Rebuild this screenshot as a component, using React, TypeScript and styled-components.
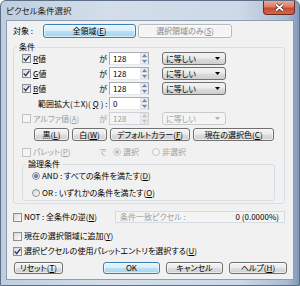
import React from "react";
import styled, { createGlobalStyle } from "styled-components";

const GlobalStyle = createGlobalStyle`
    html, body {
        margin: 0;
        padding: 0;
        background: #ffffff;
    }
    body {
        font-family: "Noto Sans CJK JP", "Noto Sans", sans-serif;
        font-size: 8px;
        line-height: 10px;
        color: #000;
        font-feature-settings: "palt";
    }
`;

type Tone = "normal" | "default" | "disabled";

const GREY_TEXT = "#a0a0a0";

export default function App() {
    return (
        <>
            <GlobalStyle />
            <Window>
                <TitleBar>
                    <Title>ピクセル条件選択</Title>
                    <CloseButton>
                        <svg width="11" height="9" viewBox="0 0 11 9">
                            <path d="M2 1.5 L9 7.5 M9 1.5 L2 7.5" stroke="#4a1d14" strokeWidth="3.2" />
                            <path d="M2 1.5 L9 7.5 M9 1.5 L2 7.5" stroke="#ffffff" strokeWidth="1.8" />
                        </svg>
                    </CloseButton>
                </TitleBar>
                <Client>
                    <TargetRow>
                        <TargetLabel>対象 :</TargetLabel>
                        <Button $w={93} $h={14} $tone="default">
                            全領域(<Mn>E</Mn>)
                        </Button>
                        <Button $w={94} $h={14} $tone="disabled">
                            選択領域のみ(<Mn>S</Mn>)
                        </Button>
                    </TargetRow>

                    <Group>
                        <Legend>条件</Legend>
                        <GroupBody>
                            <ConditionGrid>
                                <ChannelRow mn="R" suffix="値" checked />
                                <ChannelRow mn="G" suffix="値" checked />
                                <ChannelRow mn="B" suffix="値" checked />
                                <Cell $indent={16}>
                                    範囲拡大(±X)(<Mn>Q</Mn>) :
                                </Cell>
                                <span />
                                <SpinBox value="0" />
                                <span />
                                <Cell>
                                    <CheckBox disabled />
                                    <Muted>
                                        アルファ値(<Mn>A</Mn>)
                                    </Muted>
                                </Cell>
                                <Muted>が</Muted>
                                <SpinBox value="128" disabled />
                                <Combo value="に等しい" disabled />
                            </ConditionGrid>

                            <ColorButtons>
                                <Button $w={35} $h={13}>
                                    黒(<Mn>L</Mn>)
                                </Button>
                                <Button $w={35} $h={13}>
                                    白(<Mn>W</Mn>)
                                </Button>
                                <Button $w={80} $h={13}>
                                    デフォルトカラー(<Mn>F</Mn>)
                                </Button>
                                <Button $w={81} $h={13}>
                                    現在の選択色(<Mn>C</Mn>)
                                </Button>
                            </ColorButtons>

                            <PaletteRow>
                                <Cell>
                                    <CheckBox disabled />
                                    <Muted>
                                        パレット(<Mn>P</Mn>)
                                    </Muted>
                                </Cell>
                                <Muted>で</Muted>
                                <RadioPair>
                                    <Cell>
                                        <Radio selected disabled />
                                        <Muted>選択</Muted>
                                    </Cell>
                                    <Cell>
                                        <Radio disabled />
                                        <Muted>非選択</Muted>
                                    </Cell>
                                </RadioPair>
                            </PaletteRow>

                            <LogicGroup>
                                <Legend>論理条件</Legend>
                                <LogicBody>
                                    <Cell>
                                        <Radio selected />
                                        <span>
                                            AND : すべての条件を満たす(<Mn>D</Mn>)
                                        </span>
                                    </Cell>
                                    <Cell>
                                        <Radio />
                                        <span>
                                            OR : いずれかの条件を満たす(<Mn>O</Mn>)
                                        </span>
                                    </Cell>
                                </LogicBody>
                            </LogicGroup>
                        </GroupBody>
                    </Group>

                    <NotRow>
                        <Cell>
                            <CheckBox />
                            <span>
                                NOT : 全条件の逆(<Mn>N</Mn>)
                            </span>
                        </Cell>
                        <MatchField>
                            <Muted>条件一致ピクセル :</Muted>
                            <span>0 (0.0000%)</span>
                        </MatchField>
                    </NotRow>

                    <OptionRow $top={8}>
                        <CheckBox />
                        <span>
                            現在の選択領域に追加(<Mn>Y</Mn>)
                        </span>
                    </OptionRow>
                    <OptionRow $top={5}>
                        <CheckBox checked />
                        <span>
                            選択ピクセルの使用パレットエントリを選択する(<Mn>U</Mn>)
                        </span>
                    </OptionRow>

                    <Footer>
                        <Button $w={49} $h={12}>
                            リセット(<Mn>T</Mn>)
                        </Button>
                        <FooterRight>
                            <Button $w={57} $h={12} $tone="default">
                                OK
                            </Button>
                            <Button $w={57} $h={12}>
                                キャンセル
                            </Button>
                            <Button $w={58} $h={12}>
                                ヘルプ(<Mn>H</Mn>)
                            </Button>
                        </FooterRight>
                    </Footer>
                </Client>
            </Window>
        </>
    );
}

const ChannelRow: React.FC<{ mn: string; suffix: string; checked?: boolean }> = ({
    mn,
    suffix,
    checked,
}) => (
    <>
        <Cell>
            <CheckBox checked={checked} />
            <span>
                <Mn>{mn}</Mn>
                {suffix}
            </span>
        </Cell>
        <span>が</span>
        <SpinBox value="128" />
        <Combo value="に等しい" />
    </>
);

const CheckBox: React.FC<{ checked?: boolean; disabled?: boolean }> = ({ checked, disabled }) => (
    <CheckFace $disabled={disabled}>
        {checked && (
            <svg width="7" height="7" viewBox="0 0 7 7">
                <path d="M0.7 3.4 L2.7 5.6 L6.4 0.9" fill="none" stroke="#23386e" strokeWidth="1.4" />
            </svg>
        )}
    </CheckFace>
);

const Radio: React.FC<{ selected?: boolean; disabled?: boolean }> = ({ selected, disabled }) => (
    <RadioFace $disabled={disabled}>{selected && <RadioDot $disabled={disabled} />}</RadioFace>
);

const SpinBox: React.FC<{ value: string; disabled?: boolean }> = ({ value, disabled }) => (
    <SpinFrame $disabled={disabled}>
        <SpinValue $disabled={disabled}>{value}</SpinValue>
        <SpinButtons $disabled={disabled}>
            <SpinHalf>
                <svg width="5" height="3" viewBox="0 0 5 3">
                    <path d="M0 3 L2.5 0 L5 3 Z" fill={disabled ? "#c4c4c4" : "#6f86a8"} />
                </svg>
            </SpinHalf>
            <SpinHalf>
                <svg width="5" height="3" viewBox="0 0 5 3">
                    <path d="M0 0 L2.5 3 L5 0 Z" fill={disabled ? "#c4c4c4" : "#6f86a8"} />
                </svg>
            </SpinHalf>
        </SpinButtons>
    </SpinFrame>
);

const Combo: React.FC<{ value: string; disabled?: boolean }> = ({ value, disabled }) => (
    <ComboBox $disabled={disabled}>
        <span>{value}</span>
        <svg width="5" height="3" viewBox="0 0 5 3">
            <path d="M0 0 L2.5 3 L5 0 Z" fill={disabled ? "#b0b0b0" : "#000"} />
        </svg>
    </ComboBox>
);

const Window = styled.div`
    width: 300px;
    height: 286px;
    box-sizing: border-box;
    display: flex;
    flex-direction: column;
    border: 1px solid #5d6f86;
    border-radius: 6px 6px 0 0;
    padding: 0 5px 5px 5px;
    background: linear-gradient(
        to right,
        #bfcedf 0%,
        #d3deea 35%,
        #cdd9e7 80%,
        #a9bbd2 96%,
        #7f97b8 100%
    );
`;

const TitleBar = styled.div`
    height: 19px;
    display: flex;
    justify-content: space-between;
    align-items: flex-start;
`;

const Title = styled.span`
    margin-top: 4px;
    font-size: 8.5px;
    color: #1a1a1a;
`;

const CloseButton = styled.div`
    width: 32px;
    height: 14px;
    margin-right: -1px;
    box-sizing: border-box;
    display: flex;
    align-items: center;
    justify-content: center;
    border: 1px solid #6b2a1f;
    border-top: none;
    border-radius: 0 0 4px 4px;
    background: linear-gradient(#e9a898 0%, #d97c66 45%, #c64a30 55%, #d3664a 100%);
`;

const Client = styled.div`
    flex: 1;
    display: flex;
    flex-direction: column;
    background: #f1f1f1;
    border: 1px solid #8c9db3;
    padding: 3px 6px 0 6px;
`;

const TargetRow = styled.div`
    display: flex;
    align-items: center;
    gap: 2px;
    height: 14px;
`;

const TargetLabel = styled.span`
    width: 28px;
`;

const Button = styled.div<{ $w: number; $h: number; $tone?: Tone }>`
    width: ${p => p.$w}px;
    height: ${p => p.$h}px;
    box-sizing: border-box;
    flex-shrink: 0;
    display: flex;
    align-items: center;
    justify-content: center;
    white-space: nowrap;
    border-radius: 3px;
    border: 1px solid
        ${p => (p.$tone === "default" ? "#3c7fb1" : p.$tone === "disabled" ? "#b5b9bc" : "#707070")};
    color: ${p => (p.$tone === "disabled" ? "#8a8a8a" : "#000")};
    background: ${p =>
        p.$tone === "default"
            ? "linear-gradient(#e8f5fc 0%, #d7eefb 48%, #b9e0f6 52%, #a3d4f1 100%)"
            : p.$tone === "disabled"
            ? "#f4f4f4"
            : "linear-gradient(#f3f3f3 0%, #ebebeb 48%, #dddddd 52%, #cfcfcf 100%)"};
    box-shadow: inset 0 0 0 1px rgba(255, 255, 255, 0.6);
`;

const Mn = styled.u`
    text-decoration: underline;
    text-underline-offset: 1px;
`;

const Muted = styled.span`
    color: ${GREY_TEXT};
`;

const Group = styled.fieldset`
    margin: 4px 2px 0 0;
    padding: 0;
    min-width: 0;
    border: 1px solid #d5dfe5;
    border-radius: 3px;
`;

const Legend = styled.legend`
    margin-left: 3px;
    padding: 0 2px;
    line-height: 10px;
`;

const GroupBody = styled.div`
    display: flex;
    flex-direction: column;
    padding: 0 0 2px 8px;
`;

const ConditionGrid = styled.div`
    display: grid;
    grid-template-columns: 77px 10px 53px 64px;
    grid-auto-rows: 13px;
    row-gap: 2px;
    align-items: center;
`;

const Cell = styled.div<{ $indent?: number }>`
    display: flex;
    align-items: center;
    gap: 2px;
    white-space: nowrap;
    padding-left: ${p => p.$indent ?? 0}px;
`;

const CheckFace = styled.span<{ $disabled?: boolean }>`
    width: 9px;
    height: 9px;
    box-sizing: border-box;
    flex-shrink: 0;
    display: inline-flex;
    align-items: center;
    justify-content: center;
    border: 1px solid ${p => (p.$disabled ? "#c2c2c2" : "#8e8f8f")};
    background: ${p => (p.$disabled ? "#f4f4f4" : "linear-gradient(135deg, #d9d9d9, #fbfbfb)")};
`;

const RadioFace = styled.span<{ $disabled?: boolean }>`
    width: 8px;
    height: 8px;
    box-sizing: border-box;
    flex-shrink: 0;
    border-radius: 50%;
    display: inline-flex;
    align-items: center;
    justify-content: center;
    border: 1px solid ${p => (p.$disabled ? "#c8c8c8" : "#8e8f8f")};
    background: ${p => (p.$disabled ? "#f4f4f4" : "linear-gradient(135deg, #d6d6d6, #fdfdfd)")};
`;

const RadioDot = styled.span<{ $disabled?: boolean }>`
    width: 4px;
    height: 4px;
    border-radius: 50%;
    background: ${p =>
        p.$disabled ? "#bdbdbd" : "radial-gradient(circle at 35% 35%, #7d9ac8, #2c4a7f)"};
`;

const SpinFrame = styled.div<{ $disabled?: boolean }>`
    width: 40px;
    height: 13px;
    box-sizing: border-box;
    display: flex;
    border: 1px solid ${p => (p.$disabled ? "#d0d3d6" : "#abadb3")};
    border-bottom-color: ${p => (p.$disabled ? "#d0d3d6" : "#e3e9ef")};
    background: ${p => (p.$disabled ? "#f4f4f4" : "#ffffff")};
`;

const SpinValue = styled.span<{ $disabled?: boolean }>`
    flex: 1;
    padding-left: 3px;
    line-height: 11px;
    color: ${p => (p.$disabled ? GREY_TEXT : "#000")};
`;

const SpinButtons = styled.div<{ $disabled?: boolean }>`
    width: 8px;
    display: flex;
    flex-direction: column;
    gap: 1px;
    background: ${p => (p.$disabled ? "#f0f0f0" : "#eef1f5")};
`;

const SpinHalf = styled.span`
    flex: 1;
    display: flex;
    align-items: center;
    justify-content: center;
    border: 1px solid #dadfe6;
    border-radius: 1px;
`;

const ComboBox = styled.div<{ $disabled?: boolean }>`
    width: 64px;
    height: 13px;
    box-sizing: border-box;
    display: flex;
    align-items: center;
    justify-content: space-between;
    padding: 0 5px 0 3px;
    border-radius: 3px;
    border: 1px solid ${p => (p.$disabled ? "#c6cacd" : "#707070")};
    color: ${p => (p.$disabled ? GREY_TEXT : "#000")};
    background: ${p =>
        p.$disabled
            ? "#f4f4f4"
            : "linear-gradient(#f3f3f3 0%, #ebebeb 48%, #dddddd 52%, #cfcfcf 100%)"};
`;

const ColorButtons = styled.div`
    display: flex;
    gap: 3px;
    margin: 3px 0 0 12px;
`;

const PaletteRow = styled.div`
    display: grid;
    grid-template-columns: 77px 10px auto;
    align-items: center;
    height: 10px;
    margin-top: 6px;
`;

const RadioPair = styled.div`
    display: flex;
    gap: 13px;
    padding-left: 4px;
`;

const LogicGroup = styled.fieldset`
    width: 253px;
    box-sizing: border-box;
    margin: 2px 0 0 0;
    padding: 0;
    min-width: 0;
    border: 1px solid #d5dfe5;
    border-radius: 3px;
`;

const LogicBody = styled.div`
    display: flex;
    flex-direction: column;
    gap: 7px;
    padding: 2px 0 2px 9px;
`;

const NotRow = styled.div`
    display: flex;
    align-items: center;
    justify-content: space-between;
    height: 12px;
    margin: 7px 2px 0 0;
`;

const MatchField = styled.div`
    width: 170px;
    height: 12px;
    box-sizing: border-box;
    display: flex;
    align-items: center;
    justify-content: space-between;
    padding: 0 5px 0 4px;
    border: 1px solid #d5dce3;
    background: #f4f4f4;
`;

const OptionRow = styled.div<{ $top: number }>`
    display: flex;
    align-items: center;
    gap: 2px;
    height: 10px;
    margin-top: ${p => p.$top}px;
`;

const Footer = styled.div`
    display: flex;
    justify-content: space-between;
    margin: 6px 0 0 1px;
`;

const FooterRight = styled.div`
    display: flex;
    gap: 6px;
`;
